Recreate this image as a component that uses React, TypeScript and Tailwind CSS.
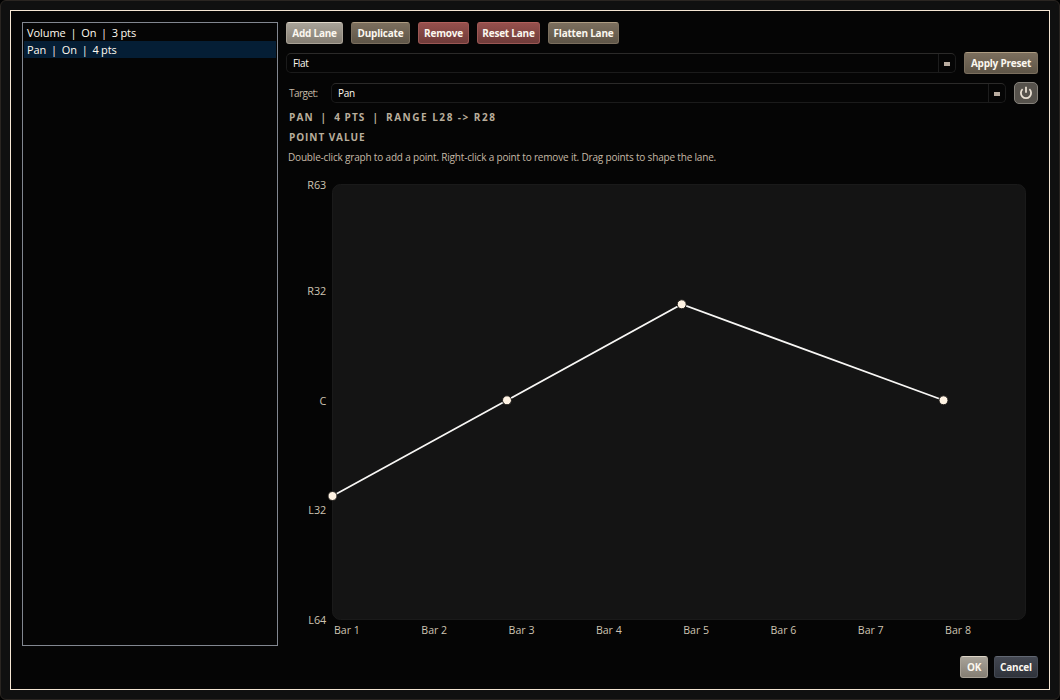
import clsx from 'clsx';

const lanes = [
  { name: 'Volume', state: 'On', points: 3 },
  { name: 'Pan', state: 'On', points: 4 },
];

const points = [
  { x: 46.5, y: 321 },
  { x: 221, y: 225.3 },
  { x: 395.7, y: 129.3 },
  { x: 657.5, y: 225.3 },
];

const valueLabels = [
  { text: 'R63', y: 14 },
  { text: 'R32', y: 120 },
  { text: 'C', y: 230 },
  { text: 'L32', y: 339 },
  { text: 'L64', y: 449 },
];

const bars = [1, 2, 3, 4, 5, 6, 7, 8];

const tones = {
  light: 'from-[#a8a399] to-[#857e73] border-[#a9a296] border-t-[#ded6c8]',
  tan: 'from-[#7c6f5e] to-[#5f5648] border-[#7b6f5e] border-t-[#ad9c82]',
  red: 'from-[#96504d] to-[#703c3a] border-[#9b5754] border-t-[#b0605c]',
  slate: 'from-[#434751] to-[#2f333b] border-[#454a54] border-t-[#626873]',
};

function Button({ label, tone, className }: { label: string; tone: keyof typeof tones; className: string }) {
  return (
    <button
      className={clsx(
        'flex h-[22px] shrink-0 items-center justify-center whitespace-nowrap rounded-[3px] border bg-linear-to-b text-[10px] font-bold leading-none tracking-[-0.22px] text-[#fbf7ef]',
        tones[tone],
        className,
      )}
    >
      {label}
    </button>
  );
}

function Select({ value }: { value: string }) {
  return (
    <div className="flex h-5 flex-1 items-center rounded-[5px] border border-[#1b1b1b] border-t-[#2b2a29] bg-[#050505]">
      <span className="flex-1 pl-[6px] text-[10px] leading-none tracking-[-0.3px] text-[#fffaf0]">{value}</span>
      <span className="flex h-full w-[17px] items-center justify-center border-l border-[#1d1d1d]">
        <span className="mt-[2px] h-1 w-[6px] bg-[#b9aca0]" />
      </span>
    </div>
  );
}

function Graph() {
  return (
    <svg width="752" height="470" className="block overflow-visible">
      <rect x="46.5" y="9.5" width="693" height="435" rx="8" fill="#141414" stroke="#1a1a1a" />
      {valueLabels.map((l) => (
        <text key={l.text} x="40.3" y={l.y} textAnchor="end" fontSize="10.8" fill="#cdc3b2">
          {l.text}
        </text>
      ))}
      {bars.map((n, i) => (
        <text key={n} x={48 + i * 87.3} y="459" fontSize="10.6" fill="#cdc3b2">
          Bar {n}
        </text>
      ))}
      <polyline
        points={points.map((p) => `${p.x},${p.y}`).join(' ')}
        fill="none"
        stroke="#f8f7f5"
        strokeWidth="1.7"
      />
      {points.map((p) => (
        <circle key={p.x} cx={p.x} cy={p.y} r="4.5" fill="#fff3e3" stroke="#1c1a18" strokeWidth="1" />
      ))}
    </svg>
  );
}

export default function App() {
  return (
    <div className="h-[700px] w-[1060px] overflow-hidden bg-black font-['Open_Sans','Noto_Sans',sans-serif]">
      <div className="h-full rounded-[6px] border border-[#2a2521] bg-[#101010] p-[9px]">
        <div className="flex h-full gap-2 border border-[#f5e6d3] bg-[#050505] p-[11px]">
          {/* Lane list */}
          <div className="h-[624px] w-64 shrink-0 border border-[#828790] p-px">
            {lanes.map((lane) => (
              <div
                key={lane.name}
                className={clsx(
                  'flex h-[17px] items-center whitespace-pre pl-[3px] text-[11px] leading-none tracking-[-0.07px] text-[#fffaf0] [word-spacing:-0.4px]',
                  lane.name === 'Pan' && 'bg-[#051e35]',
                )}
              >
                {`${lane.name}  |  ${lane.state}  |  ${lane.points} pts`}
              </div>
            ))}
          </div>

          <div className="flex w-[752px] flex-col">
            <div className="flex gap-2">
              <Button label="Add Lane" tone="light" className="w-[57px]" />
              <Button label="Duplicate" tone="tan" className="w-[59px]" />
              <Button label="Remove" tone="red" className="w-[51px]" />
              <Button label="Reset Lane" tone="red" className="w-[63px]" />
              <Button label="Flatten Lane" tone="tan" className="w-[71px]" />
            </div>

            <div className="mt-2 flex items-center gap-2">
              <Select value="Flat" />
              <Button label="Apply Preset" tone="tan" className="w-[74px]" />
            </div>

            <div className="mt-2 flex items-center">
              <span className="w-[45px] pl-[3px] text-[10px] leading-none tracking-[-0.55px] text-[#c6baa7]">Target:</span>
              <Select value="Pan" />
              <button className="ml-2 flex h-[22px] w-6 items-center justify-center rounded-[5px] border border-[#85817a] bg-[#56524c]">
                <svg width="14" height="14" viewBox="0 0 14 14" fill="none" stroke="#e8dfd2" strokeWidth="1.8">
                  <path d="M3.6 3.2a5.1 5.1 0 1 0 6.8 0" />
                  <path d="M7 0.8v6" />
                </svg>
              </button>
            </div>

            <div className="mt-[3px] pl-[3px] text-[#b9ae9c]">
              <p className="h-5 whitespace-pre text-[10px] font-bold leading-[21px] tracking-[1.1px] [word-spacing:-0.2px]">
                {'PAN  |  4 PTS  |  '}
                <span className="tracking-[1.55px]">{'RANGE L28 -> R28'}</span>
              </p>
              <p className="h-5 text-[10px] font-bold leading-[21px] tracking-[0.93px]">POINT VALUE</p>
              <p className="-ml-px h-5 text-[10px] leading-[21px] tracking-[-0.18px] text-[#c6baa7]">
                Double-click graph to add a point. Right-click a point to remove it. Drag points to shape the lane.
              </p>
            </div>

            <div className="mt-[8px]">
              <Graph />
            </div>

            <div className="mt-[11px] flex justify-end gap-[6px]">
              <Button label="OK" tone="light" className="w-[28px]" />
              <Button label="Cancel" tone="slate" className="w-[44px]" />
            </div>
          </div>
        </div>
      </div>
    </div>
  );
}
